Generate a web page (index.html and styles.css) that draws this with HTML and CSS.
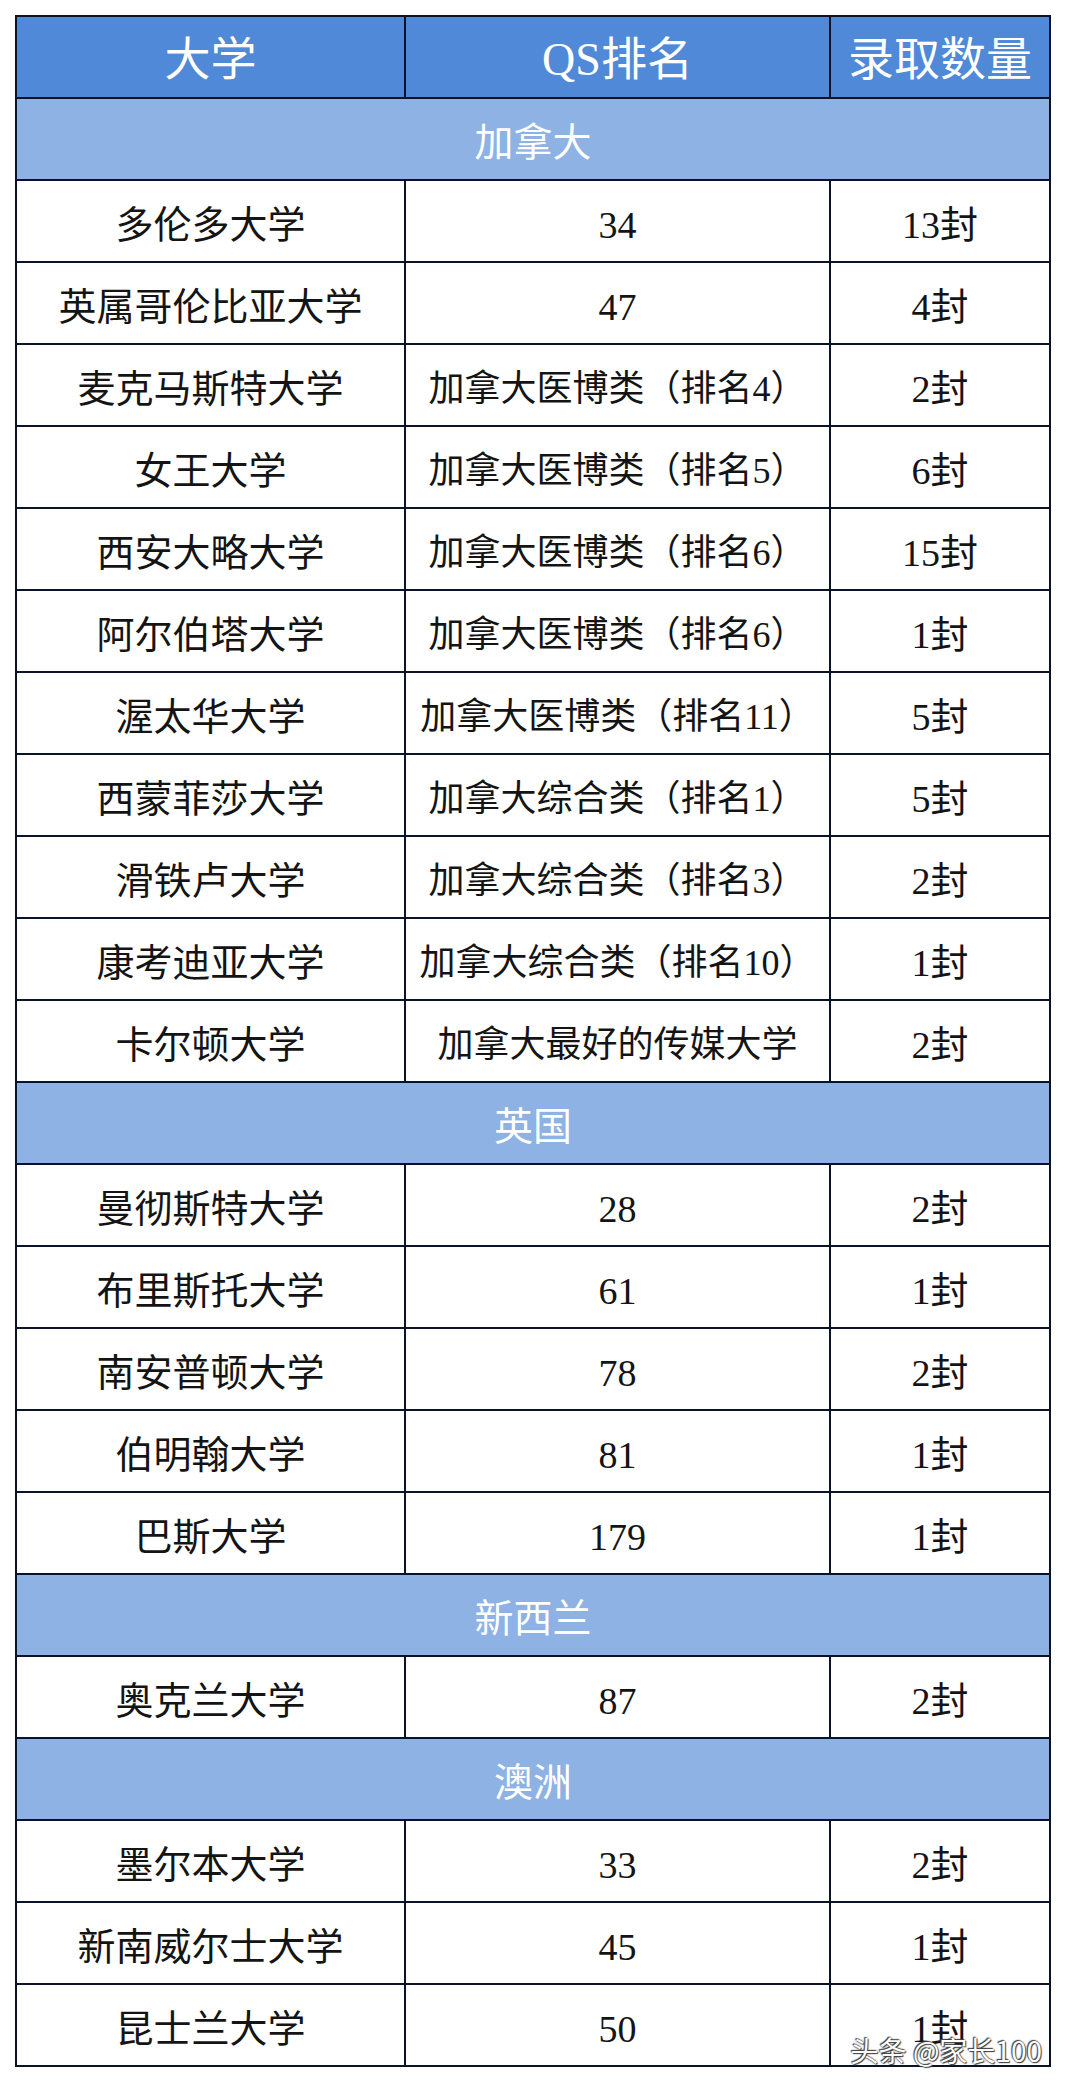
FILE: index.html
```html
<!DOCTYPE html>
<html lang="zh">
<head>
<meta charset="utf-8">
<title>录取数量</title>
<link rel="stylesheet" href="styles.css">
</head>
<body>
<div class="page">
  <div class="table">
    <div class="cell head">大学</div>
    <div class="cell head">QS排名</div>
    <div class="cell head">录取数量</div>

    <div class="cell section">加拿大</div>
    <div class="cell">多伦多大学</div><div class="cell num">34</div><div class="cell">13封</div>
    <div class="cell">英属哥伦比亚大学</div><div class="cell num">47</div><div class="cell">4封</div>
    <div class="cell">麦克马斯特大学</div><div class="cell mid">加拿大医博类（排名4）</div><div class="cell">2封</div>
    <div class="cell">女王大学</div><div class="cell mid">加拿大医博类（排名5）</div><div class="cell">6封</div>
    <div class="cell">西安大略大学</div><div class="cell mid">加拿大医博类（排名6）</div><div class="cell">15封</div>
    <div class="cell">阿尔伯塔大学</div><div class="cell mid">加拿大医博类（排名6）</div><div class="cell">1封</div>
    <div class="cell">渥太华大学</div><div class="cell mid">加拿大医博类（排名11）</div><div class="cell">5封</div>
    <div class="cell">西蒙菲莎大学</div><div class="cell mid">加拿大综合类（排名1）</div><div class="cell">5封</div>
    <div class="cell">滑铁卢大学</div><div class="cell mid">加拿大综合类（排名3）</div><div class="cell">2封</div>
    <div class="cell">康考迪亚大学</div><div class="cell mid">加拿大综合类（排名10）</div><div class="cell">1封</div>
    <div class="cell">卡尔顿大学</div><div class="cell mid">加拿大最好的传媒大学</div><div class="cell">2封</div>

    <div class="cell section">英国</div>
    <div class="cell">曼彻斯特大学</div><div class="cell num">28</div><div class="cell">2封</div>
    <div class="cell">布里斯托大学</div><div class="cell num">61</div><div class="cell">1封</div>
    <div class="cell">南安普顿大学</div><div class="cell num">78</div><div class="cell">2封</div>
    <div class="cell">伯明翰大学</div><div class="cell num">81</div><div class="cell">1封</div>
    <div class="cell">巴斯大学</div><div class="cell num">179</div><div class="cell">1封</div>

    <div class="cell section">新西兰</div>
    <div class="cell">奥克兰大学</div><div class="cell num">87</div><div class="cell">2封</div>

    <div class="cell section">澳洲</div>
    <div class="cell">墨尔本大学</div><div class="cell num">33</div><div class="cell">2封</div>
    <div class="cell">新南威尔士大学</div><div class="cell num">45</div><div class="cell">1封</div>
    <div class="cell">昆士兰大学</div><div class="cell num">50</div><div class="cell">1封</div>
  </div>
  <div class="watermark">头条 @家长100</div>
</div>
</body>
</html>
```
FILE: styles.css
```css
html, body {
  margin: 0;
  padding: 0;
  background: #ffffff;
}

.page {
  position: relative;
  padding: 15px;
  width: 1036px;
  font-family: "Liberation Serif", "Noto Sans CJK SC", serif;
  color: #141414;
}

.table {
  display: grid;
  grid-template-columns: 387px 423px 218px;
  grid-auto-rows: 80px;
  gap: 2px;
  padding: 2px;
  background: #0b1426;
}

.cell {
  background: #ffffff;
  display: flex;
  align-items: center;
  justify-content: center;
  font-size: 38px;
  line-height: 1;
  padding-top: 8px;
  box-sizing: border-box;
  white-space: nowrap;
}

.cell.mid {
  font-size: 36px;
}

.cell.head {
  background: #5089d7;
  color: #ffffff;
  font-size: 46px;
  padding-top: 6px;
}

.cell.section {
  grid-column: 1 / -1;
  background: #8db2e3;
  color: #ffffff;
  font-size: 39px;
  padding-top: 6px;
}

.watermark {
  position: absolute;
  right: 24px;
  bottom: 12px;
  font-family: "Noto Sans CJK SC", "Noto Sans", sans-serif;
  font-size: 28px;
  color: #ffffff;
  text-shadow: 0 0 2px #333, 1px 1px 1px #444, -1px -1px 1px #444;
}
```
